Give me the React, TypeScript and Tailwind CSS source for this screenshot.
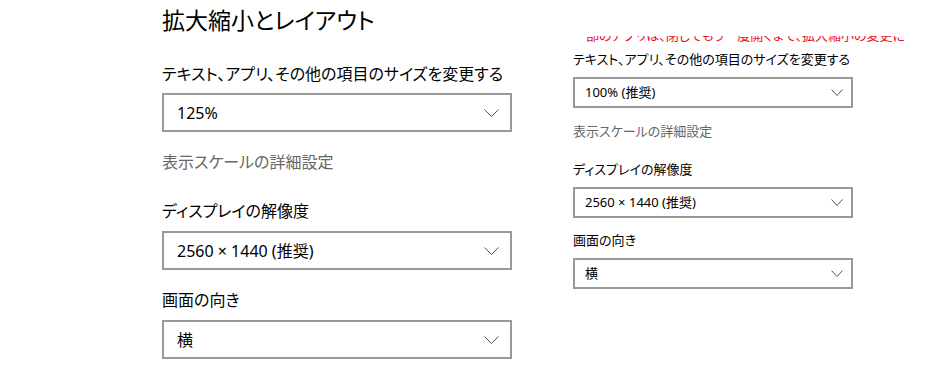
import React from 'react';

const font = "font-['Noto_Sans_CJK_JP','Noto_Sans',sans-serif] [font-feature-settings:'palt']";
const valueFont = "font-['Noto_Sans','Noto_Sans_CJK_JP',sans-serif]";

function Chevron({ w, h }: { w: number; h: number }) {
  return (
    <svg width={w} height={h} viewBox={`0 0 ${w} ${h}`} className="shrink-0">
      <polyline points={`0.5,0.5 ${w / 2},${h - 0.5} ${w - 0.5},0.5`} fill="none" stroke="#555" strokeWidth="1" />
    </svg>
  );
}

function BigSelect({ value }: { value: string }) {
  return (
    <div className="flex h-[39px] w-[350px] items-center justify-between border-2 border-[#999999] bg-white pl-[13px] pr-[11px]">
      <span className={`text-[16px] leading-none text-black ${valueFont}`}>{value}</span>
      <Chevron w={15} h={8} />
    </div>
  );
}

function SmallSelect({ value }: { value: string }) {
  return (
    <div className="flex h-[31px] w-[280px] items-center justify-between border-2 border-[#999999] bg-white pl-[10px] pr-[8px]">
      <span className={`text-[13px] leading-none text-black ${valueFont}`}>{value}</span>
      <Chevron w={12} h={7} />
    </div>
  );
}

export default function App() {
  return (
    <div className={`flex h-[376px] w-[927px] overflow-hidden bg-white ${font}`}>
      {/* left: 125% */}
      <div className="ml-[162px] flex w-[350px] flex-col pt-[3px]">
        <h1 className="text-[23px] leading-[32px] text-black">拡大縮小とレイアウト</h1>
        <div className="mt-[26px] whitespace-nowrap text-[16px] leading-[24px] text-black">テキスト、アプリ、その他の項目のサイズを変更する</div>
        <div className="mt-[8px]">
          <BigSelect value="125%" />
        </div>
        <div className="mt-[17px] text-[16px] leading-[24px] text-[#666666]">表示スケールの詳細設定</div>
        <div className="mt-[25px] text-[16px] leading-[24px] text-black">ディスプレイの解像度</div>
        <div className="mt-[9px]">
          <BigSelect value="2560 × 1440 (推奨)" />
        </div>
        <div className="mt-[17px] text-[16px] leading-[24px] text-black">画面の向き</div>
        <div className="mt-[9px]">
          <BigSelect value="横" />
        </div>
      </div>

      {/* right: 100% */}
      <div className="ml-[61px] flex w-[354px] flex-col pt-[36px]">
        <div className="h-[6px] overflow-hidden">
          <div className="mt-[-11px] whitespace-nowrap text-[13px] leading-[20px] text-[#e81123]">
            一部のアプリは、閉じてもう一度開くまで、拡大縮小の変更に
          </div>
        </div>
        <div className="mt-[7px] whitespace-nowrap text-[13px] leading-[20px] text-black">テキスト、アプリ、その他の項目のサイズを変更する</div>
        <div className="mt-[8px]">
          <SmallSelect value="100% (推奨)" />
        </div>
        <div className="mt-[13px] text-[13px] leading-[20px] text-[#666666]">表示スケールの詳細設定</div>
        <div className="mt-[18px] text-[13px] leading-[20px] text-black">ディスプレイの解像度</div>
        <div className="mt-[8px]">
          <SmallSelect value="2560 × 1440 (推奨)" />
        </div>
        <div className="mt-[12px] text-[13px] leading-[20px] text-black">画面の向き</div>
        <div className="mt-[8px]">
          <SmallSelect value="横" />
        </div>
      </div>
    </div>
  );
}
